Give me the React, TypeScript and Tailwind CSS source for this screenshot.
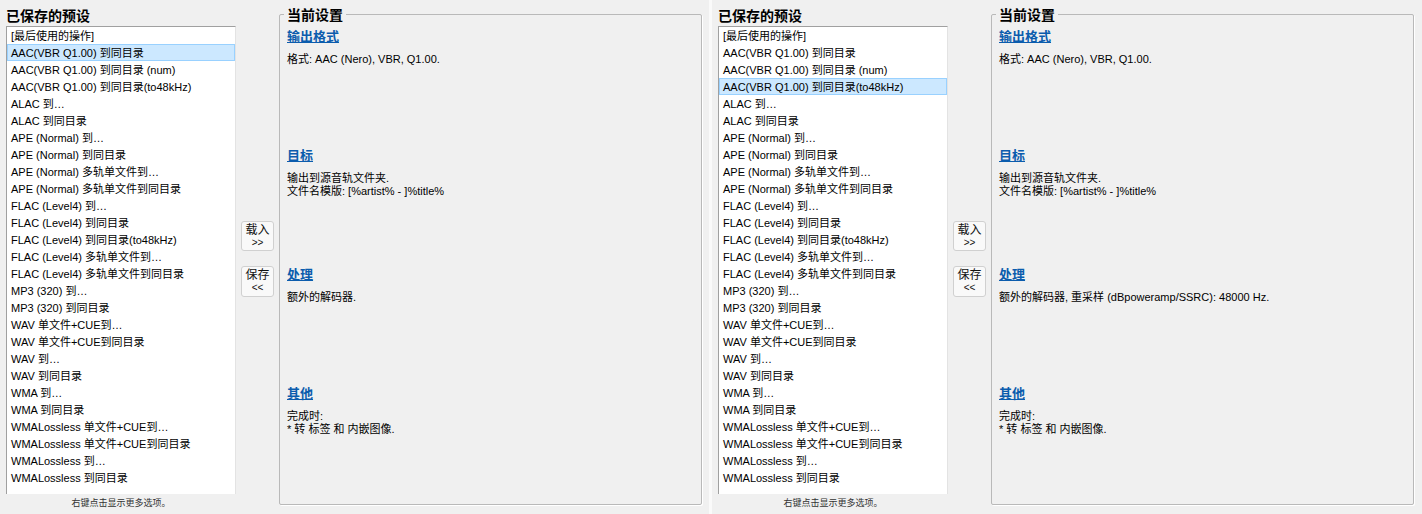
import React from 'react'

const presets = [
  '[最后使用的操作]',
  'AAC(VBR Q1.00) 到同目录',
  'AAC(VBR Q1.00) 到同目录 (num)',
  'AAC(VBR Q1.00) 到同目录(to48kHz)',
  'ALAC 到…',
  'ALAC 到同目录',
  'APE (Normal) 到…',
  'APE (Normal) 到同目录',
  'APE (Normal) 多轨单文件到…',
  'APE (Normal) 多轨单文件到同目录',
  'FLAC (Level4) 到…',
  'FLAC (Level4) 到同目录',
  'FLAC (Level4) 到同目录(to48kHz)',
  'FLAC (Level4) 多轨单文件到…',
  'FLAC (Level4) 多轨单文件到同目录',
  'MP3 (320) 到…',
  'MP3 (320) 到同目录',
  'WAV 单文件+CUE到…',
  'WAV 单文件+CUE到同目录',
  'WAV 到…',
  'WAV 到同目录',
  'WMA 到…',
  'WMA 到同目录',
  'WMALossless 单文件+CUE到…',
  'WMALossless 单文件+CUE到同目录',
  'WMALossless 到…',
  'WMALossless 到同目录',
]

const font = 'font-["Liberation_Sans","Noto_Sans_CJK_SC",sans-serif]'

interface SectionProps {
  title: string
  lines: string[]
}

const Section = ({ title, lines }: SectionProps) => (
  <div className="h-[119px]">
    <div className="text-[13px] leading-[17px] font-bold text-[#0b5cad] underline">{title}</div>
    <div className="mt-[8px] text-[11px] leading-[13px] text-[#000]">
      {lines.map((l) => (
        <div key={l}>{l}</div>
      ))}
    </div>
  </div>
)

const PresetPanel = ({ selected, process }: { selected: number; process: string }) => {
  return (
    <div className="flex h-[514px] w-[709px] shrink-0">
      {/* 预设列表 */}
      <div className="w-[236px] shrink-0 pl-[6px] pt-[8px]">
        <div className="h-[18px] text-[14px] leading-[17px] font-bold text-black">已保存的预设</div>
        <div className="h-[468px] border-l border-t border-l-[#a0a0a0] border-t-[#a0a0a0] border-r border-r-[#e3e3e3] bg-white">
          {presets.map((p, i) => (
            <div
              key={p}
              className={
                i === selected
                  ? 'h-[17px] border border-[#99d1ff] bg-[#cce8ff] pl-[3px] text-[11px] leading-[16px] text-[#000] whitespace-nowrap'
                  : 'h-[17px] border border-transparent pl-[3px] text-[11px] leading-[16px] text-[#000] whitespace-nowrap'
              }
            >
              {p}
            </div>
          ))}
        </div>
        <div className="h-[18px] text-center text-[9px] leading-[18px] text-[#333]">右键点击显示更多选项。</div>
      </div>

      {/* 载入 / 保存 */}
      <div className="flex w-[43px] shrink-0 flex-col gap-[15px] pl-[5px] pt-[221px]">
        <button className="flex h-[30px] w-[33px] flex-col items-center justify-center rounded-[3px] border border-[#d0d0d0] bg-[#f9f9f9] text-[#111]">
          <span className="text-[12px] leading-[13px]">载入</span>
          <span className="text-[10px] leading-[12px]">&gt;&gt;</span>
        </button>
        <button className="flex h-[31px] w-[33px] flex-col items-center justify-center rounded-[3px] border border-[#d0d0d0] bg-[#f9f9f9] text-[#111]">
          <span className="text-[12px] leading-[13px]">保存</span>
          <span className="text-[10px] leading-[12px]">&lt;&lt;</span>
        </button>
      </div>

      {/* 当前设置 */}
      <div className="w-[423px] shrink-0 pt-[14px]">
        <div className="relative h-[491px] rounded-[2px] border border-[#b9b9b9] pl-[7px] pt-[13px] shadow-[1px_1px_0_#ffffff]">
          <div className="absolute -top-[8px] left-[4px] bg-[#f0f0f0] px-[3px] text-[14px] leading-[16px] font-bold text-black">当前设置</div>
          <Section title="输出格式" lines={['格式: AAC (Nero), VBR, Q1.00.']} />
          <Section title="目标" lines={['输出到源音轨文件夹.', '文件名模版: [%artist% - ]%title%']} />
          <Section title="处理" lines={[process]} />
          <Section title="其他" lines={['完成时:', '* 转 标签 和 内嵌图像.']} />
        </div>
      </div>
    </div>
  )
}

export default function App() {
  return (
    <div className={`flex h-[514px] w-[1422px] overflow-hidden bg-[#f0f0f0] ${font}`}>
      <PresetPanel selected={1} process="额外的解码器." />
      <div className="w-[3px] shrink-0 bg-[#fafafa]" />
      <PresetPanel selected={3} process="额外的解码器, 重采样 (dBpoweramp/SSRC): 48000 Hz." />
    </div>
  )
}
